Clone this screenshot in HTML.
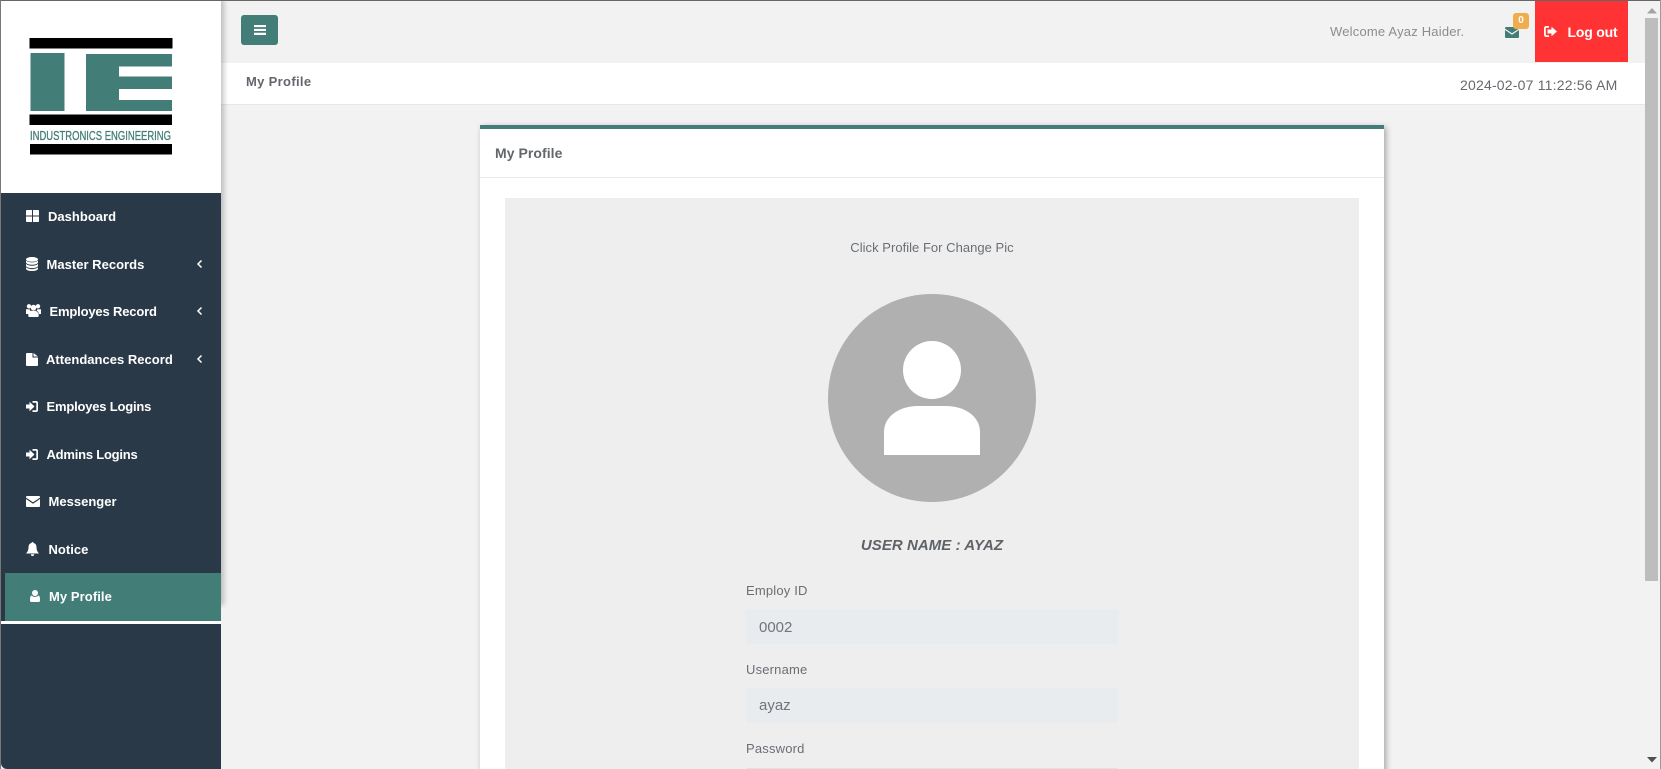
<!DOCTYPE html>
<html lang="en"><head><meta charset="utf-8"><title>My Profile</title>
<style>
*{box-sizing:border-box}
html,body{margin:0;padding:0;width:1661px;height:769px;overflow:hidden;background:#f2f2f2;font-family:"Liberation Sans",Arial,sans-serif}
#root{position:relative;width:1661px;height:769px;overflow:hidden;background:#f2f2f2}
.a,.t{position:absolute}
.t{white-space:nowrap;line-height:20px;height:20px}
#side{left:1px;top:193px;width:220px;height:576px;background:#2a3947;border-bottom-left-radius:6px}
#shadow{left:1px;top:0;width:220px;height:605px;background:#fff;box-shadow:3px 0 5px rgba(0,0,0,.22)}
#logo{left:1px;top:1px;width:220px;height:192px;background:#fff}
.m{color:#fff;font-weight:bold;font-size:13px;letter-spacing:.02px}
.ic{position:absolute;fill:#fff}
.lab{color:#6a6f74;font-size:13px;letter-spacing:.18px}
.inp{left:746px;width:372px;height:35px;background:#e9ecef;border-radius:2px}
.val{color:#6f757b;font-size:15px;left:759px}
</style></head><body>
<div id="root">
<div class="a" style="left:221px;top:0;width:1424px;height:62px;background:#f2f2f2"></div>
<div class="a" style="left:221px;top:63px;width:1424px;height:42px;background:#fff;border-bottom:1px solid #e6e6e6"></div>

<div class="a" id="shadow"></div>
<div class="a" id="side"></div>
<div class="a" id="logo">
<svg width="220" height="192" viewBox="0 0 220 192" style="display:block">
<rect x="28.500" y="37" width="143" height="10.500" fill="#000"/>
<rect x="29.500" y="52" width="34" height="58" fill="#437d78"/>
<path d="M85 53h86v12.500h-53v10h53v12.500h-53v11h53v11h-86z" fill="#437d78"/>
<rect x="28.500" y="113.500" width="142.500" height="10.500" fill="#000"/>
<rect x="29" y="143" width="142" height="10.500" fill="#000"/>
<text x="29" y="139" font-family="Liberation Sans" font-size="13" fill="#437d78" stroke="#437d78" stroke-width=".3" textLength="141" lengthAdjust="spacingAndGlyphs">INDUSTRONICS ENGINEERING</text>
</svg></div>

<div class="a" style="left:5px;top:573px;width:216px;height:48px;background:#437d78"></div>
<div class="a" style="left:1px;top:621px;width:220px;height:3px;background:#fff"></div>

<svg class="ic" style="left:26px;top:210px" width="13" height="12" viewBox="0 0 13 12"><path d="M0 1q0-1 1-1h5v5.500H0zM7 0h5q1 0 1 1v4.500H7zM0 6.500h6V12H1q-1 0-1-1zM7 6.500h6V11q0 1-1 1H7z"/></svg>
<div class="t m" style="left:48px;top:206.500px">Dashboard</div>

<svg class="ic" style="left:26px;top:257px" width="12" height="14" viewBox="0 0 12 14"><ellipse cx="6" cy="2.400" rx="6" ry="2.400"/><path d="M0 3.500q2 1.900 6 1.900t6-1.900v2.200q-1.500 2-6 2T0 5.700zM0 6.900q2 1.900 6 1.900t6-1.900v2.200q-1.500 2-6 2T0 9.100zM0 10.300q2 1.900 6 1.900t6-1.900V12q-1 2-6 2t-6-2z"/></svg>
<div class="t m" style="left:46.500px;top:254.500px">Master Records</div>
<svg class="a" style="left:196px;top:259px" width="8" height="10" viewBox="0 0 8 10"><path d="M5.500 1.500L2 5l3.500 3.500" fill="none" stroke="#fff" stroke-width="1.500"/></svg>

<svg class="ic" style="left:26px;top:304px" width="15" height="13" viewBox="0 0 15 13"><circle cx="3" cy="2.300" r="2.200"/><circle cx="12" cy="2.300" r="2.200"/><circle cx="7.500" cy="3.600" r="2.800"/><path d="M0 5.200h3.700q.3 1.600 1 2.300-1.800.6-2 2.500H0zM15 5.200h-3.700q-.3 1.600-1 2.300 1.800.6 2 2.500H15zM5 6.800h5q2.700.4 2.700 3.200v1.700q0 1.300-1.500 1.300H3.800q-1.500 0-1.500-1.300V10Q2.300 7.200 5 6.800z"/></svg>
<div class="t m" style="left:49.500px;top:301.500px;letter-spacing:-.17px">Employes Record</div>
<svg class="a" style="left:196px;top:306px" width="8" height="10" viewBox="0 0 8 10"><path d="M5.500 1.500L2 5l3.500 3.500" fill="none" stroke="#fff" stroke-width="1.500"/></svg>

<svg class="ic" style="left:26px;top:353px" width="12" height="13" viewBox="0 0 12 13"><path d="M0 1q0-1 1-1h5.500v4.500H12V12q0 1-1 1H1q-1 0-1-1zM7.500 0L12 3.500H7.500z"/></svg>
<div class="t m" style="left:46px;top:349.500px">Attendances Record</div>
<svg class="a" style="left:196px;top:354px" width="8" height="10" viewBox="0 0 8 10"><path d="M5.500 1.500L2 5l3.500 3.500" fill="none" stroke="#fff" stroke-width="1.500"/></svg>

<svg class="ic" style="left:26px;top:401px" width="12" height="11" viewBox="0 0 12 11"><path d="M0 3.500h3.500V.8L8.500 5.500 3.500 10.200V7.500H0zM6.500 0H10q2 0 2 2v7q0 2-2 2H6.500V9.200H10q.3 0 .3-.3V2.100q0-.3-.3-.3H6.500z"/></svg>
<div class="t m" style="left:46.500px;top:396.500px;letter-spacing:-.2px">Employes Logins</div>

<svg class="ic" style="left:26px;top:449px" width="12" height="11" viewBox="0 0 12 11"><path d="M0 3.500h3.500V.8L8.500 5.500 3.500 10.200V7.500H0zM6.500 0H10q2 0 2 2v7q0 2-2 2H6.500V9.200H10q.3 0 .3-.3V2.100q0-.3-.3-.3H6.500z"/></svg>
<div class="t m" style="left:46.500px;top:444.500px;letter-spacing:-.22px">Admins Logins</div>

<svg class="ic" style="left:26px;top:496px" width="14" height="11" viewBox="0 0 14 11"><path d="M1 0h12q1 0 1 1v.6L7 6.300 0 1.600V1q0-1 1-1zM0 3l7 4.700L14 3v7q0 1-1 1H1q-1 0-1-1z"/></svg>
<div class="t m" style="left:48.500px;top:491.500px">Messenger</div>

<svg class="ic" style="left:26px;top:542px" width="13" height="14" viewBox="0 0 13 14"><path d="M6.500 0q1 0 1 1 3 .6 3 4.500 0 3.500 2.500 6H0q2.500-2.500 2.500-6 0-3.900 3-4.500 0-1 1-1zM4.800 12.200h3.400Q8 14 6.500 14t-1.700-1.800z"/></svg>
<div class="t m" style="left:48.500px;top:539.500px">Notice</div>

<svg class="ic" style="left:30px;top:590px" width="10" height="12" viewBox="0 0 10 12"><circle cx="5" cy="3" r="3"/><path d="M1.500 5.500q1.500 1.500 3.500 1.500t3.500-1.500Q10 6 10 9v1.500Q10 12 8.500 12h-7Q0 12 0 10.500V9q0-3 1.500-3.500z"/></svg>
<div class="t m" style="left:49px;top:586.500px;letter-spacing:.08px">My Profile</div>

<div class="a" style="left:241px;top:15px;width:37px;height:30px;background:#437d78;border-radius:3px"></div>
<svg class="a" style="left:254px;top:25px" width="12" height="10" viewBox="0 0 12 10"><path d="M0 0h12v2.100H0zM0 3.900h12V6H0zM0 7.800h12V10H0z" fill="#fff"/></svg>

<div class="t" style="left:246px;top:72px;color:#63676c;font-weight:bold;font-size:13px;letter-spacing:.33px">My Profile</div>
<div class="t" style="left:1330px;top:22px;color:#8a8d90;font-size:13px;letter-spacing:.2px">Welcome Ayaz Haider.</div>
<div class="t" style="left:1460px;top:75px;color:#66696d;font-size:14px;letter-spacing:.2px">2024-02-07 11:22:56 AM</div>

<svg class="a" style="left:1505px;top:27px" width="14" height="11" viewBox="0 0 14 11"><path d="M1 0h12q1 0 1 1v.6L7 6.300 0 1.600V1q0-1 1-1zM0 3l7 4.700L14 3v7q0 1-1 1H1q-1 0-1-1z" fill="#437d78"/></svg>
<div class="a" style="left:1513px;top:13px;width:16px;height:16px;background:#f0ad4e;border-radius:3px;color:#fff;font-size:10px;font-weight:bold;text-align:center;line-height:16px">0</div>

<div class="a" style="left:1535px;top:0;width:93px;height:62px;background:#ff3333"></div>
<svg class="a" style="left:1544px;top:26px" width="13" height="11" viewBox="0 0 13 11"><path d="M5 0H2.500Q0 0 0 2.500v6Q0 11 2.500 11H5V9.200H2.500q-.7 0-.7-.7v-6q0-.7.7-.7H5zM7.500.8L13 5.500 7.500 10.200V7.500H3.500v-4h4z" fill="#fff"/></svg>
<div class="t" style="left:1567.500px;top:22px;color:#fff;font-weight:bold;font-size:14px;letter-spacing:-.2px">Log out</div>

<!-- scrollbar -->
<div class="a" style="left:1645px;top:0;width:16px;height:769px;background:#f2f2f2"></div>
<div class="a" style="left:1645px;top:18px;width:13px;height:563px;background:#bdbdbd"></div>
<svg class="a" style="left:1647px;top:8px" width="10" height="6"><path d="M0 5.500L5 0l5 5.500z" fill="#a3a3a3"/></svg>
<svg class="a" style="left:1647px;top:757px" width="10" height="6"><path d="M0 0h10L5 5.500z" fill="#505050"/></svg>

<!-- card -->
<div class="a" style="left:480px;top:125px;width:904px;height:660px;background:#fff;box-shadow:2px 2px 6px rgba(0,0,0,.32)"></div>
<div class="a" style="left:480px;top:125px;width:904px;height:4px;background:#437d78"></div>
<div class="a" style="left:480px;top:177px;width:904px;height:1px;background:#e8e8e8"></div>
<div class="t" style="left:495px;top:143px;color:#63676c;font-size:14px;font-weight:bold;letter-spacing:.05px">My Profile</div>

<div class="a" style="left:505px;top:198px;width:854px;height:590px;background:#eee"></div>
<div class="t" style="left:505px;width:854px;text-align:center;top:237.500px;color:#6a6f74;font-size:13px;letter-spacing:.03px">Click Profile For Change Pic</div>

<svg class="a" style="left:828px;top:294px" width="208" height="208" viewBox="0 0 208 208">
<circle cx="104" cy="104" r="104" fill="#b0b0b0"/>
<circle cx="104" cy="76" r="29" fill="#fff"/>
<path d="M56 161V138C56 122 72 112 90 112H118C136 112 152 122 152 138V161Z" fill="#fff"/>
</svg>

<div class="t" style="left:505px;width:854px;text-align:center;top:535.500px;color:#5f6368;font-size:15px;font-style:italic;font-weight:bold;letter-spacing:.05px">USER NAME : AYAZ</div>

<div class="t lab" style="left:746px;top:580.500px">Employ ID</div>
<div class="a inp" style="top:609px"></div>
<div class="t val" style="top:617.500px">0002</div>

<div class="t lab" style="left:746px;top:659.500px">Username</div>
<div class="a inp" style="top:688px"></div>
<div class="t val" style="top:696px">ayaz</div>

<div class="t lab" style="left:746px;top:738.500px">Password</div>
<div class="a inp" style="top:768px;background:#fff;border:1px solid #e0e0e0"></div>

<div class="a" style="left:0;top:0;width:1661px;height:1px;background:#666"></div>
<div class="a" style="left:0;top:0;width:1px;height:769px;background:#777"></div>
<div class="a" style="left:1660px;top:0;width:1px;height:769px;background:#999"></div>
</div>
</body></html>
